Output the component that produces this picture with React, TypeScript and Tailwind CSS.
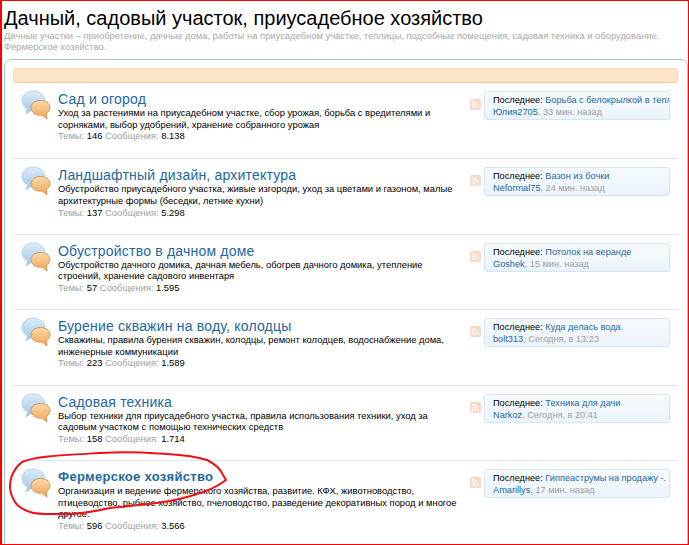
const rows = [
  { t: "Сад и огород", d: ["Уход за растениями на приусадебном участке, сбор урожая, борьба с вредителями и", "сорняками, выбор удобрений, хранение собранного урожая"], th: "146", m: "8.138", p: "Борьба с белокрылкой в тепл.", u: "Юлия2705", w: "33 мин. назад" },
  { t: "Ландшафтный дизайн, архитектура", d: ["Обустройство приусадебного участка, живые изгороди, уход за цветами и газоном, малые", "архитектурные формы (беседки, летние кухни)"], th: "137", m: "5.298", p: "Вазон из бочки", u: "Neformal75", w: "24 мин. назад" },
  { t: "Обустройство в дачном доме", d: ["Обустройство дачного домика, дачная мебель, обогрев дачного домика, утепление", "строений, хранение садового инвентаря"], th: "57", m: "1.595", p: "Потолок на веранде", u: "Goshek", w: "15 мин. назад" },
  { t: "Бурение скважин на воду, колодцы", d: ["Скважины, правила бурения скважин, колодцы, ремонт колодцев, водоснабжение дома,", "инженерные коммуникации"], th: "223", m: "1.589", p: "Куда делась вода.", u: "bolt313", w: "Сегодня, в 13:23" },
  { t: "Садовая техника", d: ["Выбор техники для приусадебного участка, правила использования техники, уход за", "садовым участком с помощью технических средств"], th: "158", m: "1.714", p: "Техника для дачи", u: "Narkoz", w: "Сегодня, в 20:41" },
  { t: "Фермерское хозяйство", d: ["Организация и ведение фермерского хозяйства, развитие. КФХ, животноводство,", "птицеводство, рыбное хозяйство, пчеловодство, разведение декоративных пород и многое", "другое."], th: "596", m: "3.566", p: "Гиппеаструмы на продажу -.", u: "Amarillys", w: "17 мин. назад" },
];

function Bubbles() {
  return (
    <svg width="32" height="32" viewBox="0 0 32 32" className="shrink-0">
      <defs>
        <linearGradient id="blueB" x1="0" y1="0" x2="0" y2="1">
          <stop offset="0" stopColor="#dcecf9" />
          <stop offset="1" stopColor="#9cc6ea" />
        </linearGradient>
        <linearGradient id="orangeB" x1="0" y1="0" x2="0" y2="1">
          <stop offset="0" stopColor="#fbd9a6" />
          <stop offset="1" stopColor="#eda659" />
        </linearGradient>
      </defs>
      <path d="M13 2C7 2 2 6 2 11.500c0 3.800 2.300 6.800 5.500 8.200L6 25l6-4c1 .2 1.500.2 2.500.2 5.500 0 10-4.200 10-9.700S19.500 2 13 2z" fill="url(#blueB)" stroke="#b4d2ea" strokeWidth="1" />
      <path d="M20.500 11.500c-5.500 0-9.500 3-9.500 7.300 0 4.200 4 7.400 9.500 7.400.7 0 1 0 1.700-.1l4.800 3.900-.8-5.400c2.300-1.300 3.800-3.400 3.800-5.800 0-4.300-4-7.300-9.500-7.300z" fill="url(#orangeB)" stroke="#d9974f" strokeWidth="1" />
    </svg>
  );
}

function Rss() {
  return (
    <svg width="11" height="11" viewBox="0 0 11 11" className="shrink-0">
      <rect width="11" height="11" rx="1.500" fill="#f9d8c6" />
      <circle cx="2.800" cy="8.200" r="1.100" fill="#fff" />
      <path d="M1.800 5.200a4 4 0 0 1 4 4M1.800 2.600a6.600 6.600 0 0 1 6.600 6.600" fill="none" stroke="#fff" strokeWidth="1.300" />
    </svg>
  );
}

export default function App() {
  return (
    <div className="relative w-[689px] h-[545px] overflow-hidden bg-white border-l-2 border-r border-y border-[#ff0000] font-['Liberation_Sans',Arial,sans-serif]">
      <div className="pl-[2px] pr-[10px]">
        <h1 className="text-[20px] leading-[24px] pt-[5px] text-black font-normal whitespace-nowrap">Дачный, садовый участок, приусадебное хозяйство</h1>
        <p className="text-[9.400px] leading-[11px] text-[#a9a9a9]">Дачные участки – приобретение, дачные дома, работы на приусадебном участке, теплицы, подсобные помещения, садовая техника и оборудование. Фермерское хозяйство.</p>
      </div>
      <div className="mt-[7px] ml-[2px] pt-[8px] pl-[8px] pr-[9px] h-[520px] border border-[#a9c8dc] rounded-[7px]">
        <div className="h-[15px] bg-[#fde4c6] border border-[#fbd9ae] border-b-[#f9c888] rounded-[3px]" />
        {rows.map((r, i) => (
          <div key={r.t} className={`flex h-[75.400px] pl-[7px] ${i > 0 ? "border-t border-[#d7e8f5]" : ""}`}>
            <div className="w-[38px] pt-[6px] shrink-0"><Bubbles /></div>
            <div className="w-[412px] pt-[8px] shrink-0">
              <h3 className={`text-[#22689f] leading-[16px] ${i === 5 ? "text-[13px] font-bold tracking-[0.3px]" : "text-[14px] font-normal tracking-[0.2px]"}`}>{r.t}</h3>
              <div className="text-[9.400px] leading-[11.600px] text-black">
                {r.d.map((l) => <div key={l} className="whitespace-nowrap">{l}</div>)}
              </div>
              <div className="text-[9.400px] leading-[11.600px] text-[#a0a0a0]">Темы: <span className="text-black">{r.th}</span> Сообщения: <span className="text-black">{r.m}</span></div>
            </div>
            <div className="pt-[16px] w-[14px] shrink-0"><Rss /></div>
            <div className="mt-[8px] w-[186px] h-[29px] pl-[8px] pt-[2px] bg-gradient-to-b from-[#f7fbfe] to-[#ebf3fb] border border-[#d5e6f3] rounded-[3px] text-[9.200px] leading-[12px] whitespace-nowrap">
              <div className="overflow-hidden"><span className="text-black">Последнее: </span><span className="text-[#22689f]">{r.p}</span></div>
              <div><span className="text-[#22689f]">{r.u}</span><span className="text-[#a0a0a0]">, {r.w}</span></div>
            </div>
          </div>
        ))}
      </div>
      <svg className="absolute left-[-2px] top-[-1px] pointer-events-none" width="689" height="545" viewBox="0 0 689 545">
        <path d="M22 462C35 456 65 455 100 453S150 453 167 454C185 455 198 457 207 460C215 464 221 470 223 475L226 480C218 486 210 490 200 493C186 498 172 501 157 503C141 505 125 506 110 508C96 511 82 514 67 514C52 514 38 515 30 512C24 510 18 507 15 502C12 497 10 492 10 487C10 482 11 477 13 473C15 469 18 465 22 462Z" fill="none" stroke="#f01018" strokeWidth="2" />
      </svg>
    </div>
  );
}
